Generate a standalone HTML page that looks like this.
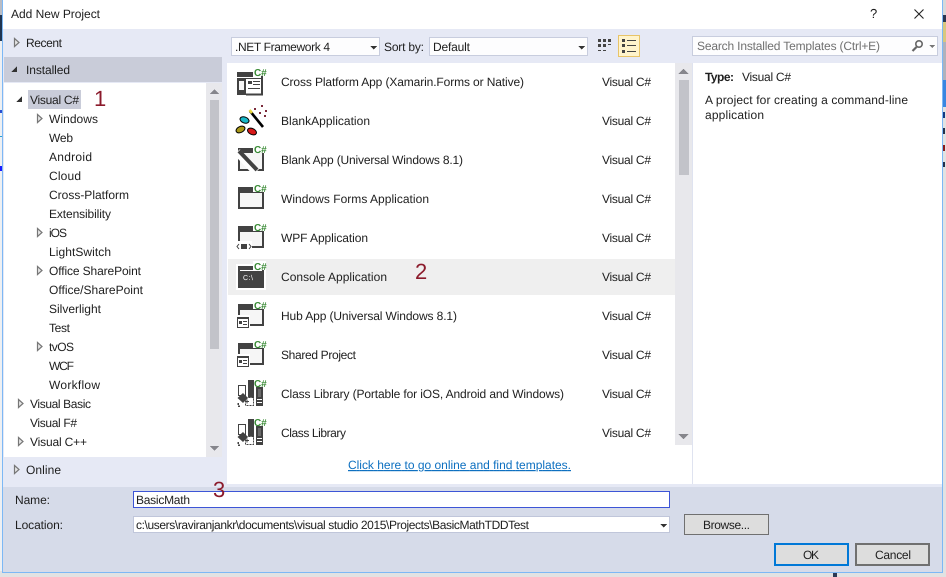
<!DOCTYPE html>
<html>
<head>
<meta charset="utf-8">
<title>Add New Project</title>
<style>
html,body{margin:0;padding:0;background:#fff;width:946px;height:577px;overflow:hidden}
svg{display:block}
text{font-family:"Liberation Sans",sans-serif;font-size:12px;fill:#1e1e1e;text-rendering:geometricPrecision}
.c{font-size:10px;font-weight:bold;fill:#388a34;letter-spacing:-.1px}
</style>
</head>
<body>
<svg width="946" height="577" viewBox="0 0 946 577" xmlns="http://www.w3.org/2000/svg" shape-rendering="crispEdges">
<defs>
<polygon id="ha" points="0.5,0.5 5,4.5 0.5,8.5" fill="#e8e8e8" stroke="#777" stroke-width="1.2" shape-rendering="auto"/>
<g id="win">
  <rect x="239" y="-10" width="24" height="20" fill="#f6f6f6" stroke="#424242" stroke-width="2"/>
  <rect x="238" y="-11" width="26" height="6" fill="#424242"/>
  <rect x="253" y="-15" width="13" height="9" fill="#fff"/>
</g>
<g id="lib">
  <rect x="238.500" y="-7.500" width="7" height="10" fill="#fff" stroke="#424242"/>
  <rect x="248" y="-13" width="6" height="21" fill="#424242"/>
  <rect x="256" y="-6" width="7" height="19" fill="#424242"/>
  <rect x="258" y="-4" width="3" height="8" fill="#6a6a6a"/>
  <rect x="257" y="6" width="5" height="1" fill="#fff"/><rect x="257" y="9" width="5" height="1" fill="#fff"/>
  <rect x="245.500" y="4.500" width="8" height="8" fill="#fff" stroke="#424242" stroke-dasharray="2 1"/>
  <polygon points="237.500,5 243,0 248,5 243,10" fill="#424242" shape-rendering="auto"/>
  <path d="M249 8.500h-4M247 6.500v4" stroke="#424242" fill="none"/>
  <path d="M238 10v3h3" stroke="#424242" stroke-width="1.500" stroke-dasharray="2 1" fill="none"/>
</g>
<g id="hub">
  <rect x="239" y="-10" width="24" height="20" fill="#f6f6f6" stroke="#424242" stroke-width="2"/>
  <rect x="238" y="-11" width="26" height="6" fill="#424242"/>
  <rect x="253" y="-15" width="13" height="9" fill="#fff"/>
  <rect x="236" y="0" width="14" height="14" fill="#fff"/>
  <rect x="237.500" y="2.500" width="11" height="10" fill="#fff" stroke="#424242"/>
  <rect x="237" y="2" width="12" height="2" fill="#424242"/>
  <rect x="239" y="6" width="3" height="3" fill="#424242"/>
  <path d="M243 6.500h4M243 9.500h4" stroke="#424242" fill="none"/>
</g>
</defs>

<!-- backdrop -->
<rect width="946" height="577" fill="#e2e2e2"/>
<rect x="0" y="0" width="3" height="15" fill="#b9bcc4"/>
<rect x="0" y="15" width="3" height="26" fill="#1f3552"/>
<rect x="0" y="41" width="3" height="530" fill="#eef0f3"/>
<rect x="0" y="110" width="2" height="3" fill="#2a4fd0"/>
<rect x="0" y="136" width="2" height="1" fill="#2aa0d0"/>
<rect x="0" y="166" width="2" height="5" fill="#1a1aff"/>
<rect x="943" y="0" width="3" height="15" fill="#d8d8d8"/>
<rect x="943" y="15" width="3" height="7" fill="#2a3550"/>
<rect x="943" y="22" width="3" height="20" fill="#d9c77e"/>
<rect x="943" y="42" width="3" height="38" fill="#b0b2bc"/>
<rect x="943" y="80" width="3" height="27" fill="#3a86e0"/>
<rect x="943" y="112" width="2" height="6" fill="#123a80"/>
<rect x="943" y="128" width="2" height="6" fill="#24304a"/>
<rect x="943" y="145" width="2" height="6" fill="#8a1a1a"/>
<rect x="943" y="162" width="2" height="5" fill="#24304a"/>
<rect x="833" y="573" width="4" height="4" fill="#2c3a55"/>

<!-- dialog -->
<rect x="3" y="0" width="940" height="573" fill="#fff"/>
<rect x="3" y="29" width="939" height="458" fill="#e6e9f5"/>
<rect x="3" y="487" width="939" height="85" fill="#d6dbe9"/>
<path d="M2.500 0V572.500H942.500V0" fill="none" stroke="#7db8f5"/>

<!-- title -->
<text x="11" y="18" textLength="89">Add New Project</text>
<text x="870" y="18" textLength="7" style="font-size:13px">?</text>
<path d="M914.500 9.500L923.500 18.500M923.500 9.500L914.500 18.500" stroke="#222" stroke-width="1.100" fill="none" shape-rendering="auto"/>

<!-- left panel -->
<rect x="4" y="57" width="218" height="25" fill="#c9ccd9"/>
<rect x="4" y="83" width="218" height="374" fill="#fff"/>
<use href="#ha" x="14" y="38"/>
<text x="26" y="47" textLength="36">Recent</text>
<polygon points="17,66 17,72 11,72" fill="#333"/>
<text x="26" y="74" textLength="44">Installed</text>
<rect x="28" y="90" width="53" height="19" fill="#c9ccd9"/>
<polygon points="22,96 22,102 16,102" fill="#333"/>
<text x="30" y="104" textLength="49">Visual C#</text>
<use href="#ha" x="37" y="114"/>
<text x="49" y="123" textLength="49">Windows</text>
<text x="49" y="142" textLength="24">Web</text>
<text x="49" y="161" textLength="43">Android</text>
<text x="49" y="180" textLength="32">Cloud</text>
<text x="49" y="199" textLength="80">Cross-Platform</text>
<text x="49" y="218" textLength="62">Extensibility</text>
<use href="#ha" x="37" y="228"/>
<text x="49" y="237" textLength="18">iOS</text>
<text x="49" y="256" textLength="62">LightSwitch</text>
<use href="#ha" x="37" y="266"/>
<text x="49" y="275" textLength="92">Office SharePoint</text>
<text x="49" y="294" textLength="94">Office/SharePoint</text>
<text x="49" y="313" textLength="52">Silverlight</text>
<text x="49" y="332" textLength="21">Test</text>
<use href="#ha" x="37" y="342"/>
<text x="49" y="351" textLength="25">tvOS</text>
<text x="49" y="370" textLength="25">WCF</text>
<text x="49" y="389" textLength="51">Workflow</text>
<use href="#ha" x="18" y="399"/>
<text x="30" y="408" textLength="61">Visual Basic</text>
<text x="30" y="427" textLength="47">Visual F#</text>
<use href="#ha" x="18" y="437"/>
<text x="30" y="446" textLength="57">Visual C++</text>
<use href="#ha" x="14" y="465"/>
<text x="26" y="474" textLength="35">Online</text>
<rect x="206" y="83" width="16" height="374" fill="#e8e8ec"/>
<rect x="210" y="100" width="9" height="249" fill="#c2c3c9"/>
<polygon points="214.500,89 219,94 210,94" fill="#86868c"/>
<polygon points="210,446 219,446 214.500,451" fill="#86868c"/>

<!-- toolbar -->
<rect x="231.500" y="37.500" width="148" height="18" fill="#fdfdfe" stroke="#c8cdde"/>
<text x="235" y="51" textLength="95">.NET Framework 4</text>
<polygon points="370,46 377,46 373.500,49.500" fill="#333"/>
<text x="384" y="51" textLength="40">Sort by:</text>
<rect x="429.500" y="37.500" width="158" height="18" fill="#fdfdfe" stroke="#c8cdde"/>
<text x="433" y="51" textLength="37">Default</text>
<polygon points="578,46 585,46 581.500,49.500" fill="#333"/>
<g fill="#444">
  <rect x="598" y="39" width="3" height="3"/><rect x="603" y="39" width="3" height="3"/><rect x="608" y="39" width="3" height="3"/>
  <rect x="598" y="44" width="3" height="3"/><rect x="603" y="44" width="3" height="3"/>
  <rect x="598" y="50" width="3" height="1"/><rect x="603" y="50" width="3" height="1"/>
  <rect x="608" y="44" width="3" height="1"/>
</g>
<rect x="618.500" y="35.500" width="21" height="21" fill="#fff4cc" stroke="#e8c468"/>
<g fill="#444">
  <rect x="622" y="39" width="3" height="3"/><rect x="622" y="44" width="3" height="3"/><rect x="622" y="50" width="3" height="3"/>
  <rect x="627" y="40" width="9" height="1"/><rect x="627" y="45" width="9" height="1"/><rect x="627" y="51" width="9" height="1"/>
</g>
<rect x="692.500" y="36.500" width="245" height="19" fill="#fdfdfe" stroke="#c8cdde"/>
<text x="697" y="50" textLength="183" style="fill:#717171">Search Installed Templates (Ctrl+E)</text>
<g shape-rendering="auto" fill="none" stroke="#666">
  <circle cx="919" cy="44" r="3.200" stroke-width="1.600"/>
  <path d="M916.500 47L912.500 51" stroke-width="2.200"/>
</g>
<polygon points="929,45 935,45 932,48" fill="#777"/>

<!-- list panel -->
<rect x="227" y="63" width="448" height="421" fill="#fff"/>
<rect x="228" y="259" width="447" height="36" fill="#efefef"/>
<rect x="675" y="63" width="17" height="382" fill="#e8e8ec"/>
<rect x="675" y="445" width="17" height="39" fill="#fff"/>
<rect x="679" y="80" width="10" height="95" fill="#c2c3c9"/>
<polygon points="683.500,69 689,74 678,74" fill="#86868c"/>
<polygon points="678,434 689,434 683.500,439" fill="#86868c"/>
<rect x="692" y="63" width="1" height="421" fill="#dfe3f0"/>
<rect x="693" y="63" width="249" height="421" fill="#fff"/>

<!-- icons -->
<g transform="translate(0,81)">
  <rect x="237" y="-9" width="16" height="5" fill="#424242"/>
  <rect x="237" y="-3" width="26" height="1" fill="#424242"/>
  <path d="M262 -5V13.500H246" fill="none" stroke="#424242" stroke-width="2"/>
  <rect x="237" y="-2" width="9" height="16" fill="#424242"/>
  <rect x="239" y="0" width="5" height="9" fill="#f6f6f6"/>
  <rect x="248" y="0" width="4" height="3" fill="#424242"/>
  <path d="M253 .500h7M253 3.500h7M248 7.500h12" stroke="#424242" stroke-width="1.300" fill="none"/>
  <text class="c" x="254" y="-5">C#</text>
</g>
<g transform="translate(0,120)" shape-rendering="auto">
  <path d="M250 -9L263 7" stroke="#000" stroke-width="2.600" fill="none"/>
  <path d="M249.500 -10L252 -7" stroke="#e8d840" stroke-width="2.600" fill="none"/>
  <ellipse cx="244.500" cy="0" rx="4.700" ry="3" fill="#18b8c8" stroke="#000" transform="rotate(20 244.500 0)"/>
  <ellipse cx="240.500" cy="9.500" rx="4.700" ry="3" fill="#a89818" stroke="#000" transform="rotate(-25 240.500 9.500)"/>
  <ellipse cx="252" cy="11.500" rx="4.700" ry="3" fill="#d81818" stroke="#000" transform="rotate(25 252 11.500)"/>
  <g fill="#7a2a3a"><rect x="254" y="-12" width="2" height="2"/><rect x="261" y="-15" width="2" height="2"/><rect x="265" y="-10" width="2" height="2"/><rect x="259" y="-8" width="2" height="2"/><rect x="264" y="-5" width="2" height="2"/></g>
</g>
<g transform="translate(0,159)">
  <rect x="239" y="-10" width="24" height="21" fill="#f6f6f6" stroke="#424242" stroke-width="2"/>
  <rect x="238" y="-11" width="15" height="5" fill="#424242"/>
  <rect x="253" y="-15" width="13" height="9" fill="#fff"/>
  <path d="M237 -7L256 13" stroke="#fff" stroke-width="8" fill="none" shape-rendering="auto"/>
  <path d="M239 -8L257 11" stroke="#424242" stroke-width="4" fill="none" shape-rendering="auto"/>
  <text class="c" x="254" y="-6">C#</text>
</g>
<g transform="translate(0,198)"><use href="#win"/><text class="c" x="254" y="-6">C#</text></g>
<g transform="translate(0,237)">
  <use href="#win"/>
  <rect x="235" y="4" width="17" height="10" fill="#fff"/>
  <rect x="241" y="7" width="6" height="5" fill="#424242"/>
  <path d="M239 7l-2 2.500 2 2.500M249 7l2 2.500 -2 2.500" stroke="#424242" fill="none" shape-rendering="auto"/>
  <text class="c" x="254" y="-6">C#</text>
</g>
<g transform="translate(0,276)">
  <rect x="236" y="-12" width="30" height="26" fill="#fff"/>
  <rect x="238" y="-10" width="26" height="22" fill="#424242"/>
  <rect x="240" y="-6" width="22" height="1" fill="#fff"/>
  <text x="243" y="4" style="font-size:7px;fill:#fff" textLength="10">C:\</text>
  <rect x="253" y="-15" width="13" height="9" fill="#fff"/>
  <text class="c" x="254" y="-6">C#</text>
</g>
<g transform="translate(0,315)"><use href="#hub"/><text class="c" x="254" y="-6">C#</text></g>
<g transform="translate(0,354)"><use href="#hub"/><text class="c" x="254" y="-6">C#</text></g>
<g transform="translate(0,393)"><use href="#lib"/><text class="c" x="254" y="-6">C#</text></g>
<g transform="translate(0,432)"><use href="#lib"/><text class="c" x="254" y="-6">C#</text></g>

<!-- list text -->
<text x="281" y="86" textLength="243">Cross Platform App (Xamarin.Forms or Native)</text>
<text x="281" y="125" textLength="89">BlankApplication</text>
<text x="281" y="164" textLength="182">Blank App (Universal Windows 8.1)</text>
<text x="281" y="203" textLength="148">Windows Forms Application</text>
<text x="281" y="242" textLength="87">WPF Application</text>
<text x="281" y="281" textLength="106">Console Application</text>
<text x="281" y="320" textLength="176">Hub App (Universal Windows 8.1)</text>
<text x="281" y="359" textLength="75">Shared Project</text>
<text x="281" y="398" textLength="283">Class Library (Portable for iOS, Android and Windows)</text>
<text x="281" y="437" textLength="65">Class Library</text>
<text x="602" y="86" textLength="49">Visual C#</text>
<text x="602" y="125" textLength="49">Visual C#</text>
<text x="602" y="164" textLength="49">Visual C#</text>
<text x="602" y="203" textLength="49">Visual C#</text>
<text x="602" y="242" textLength="49">Visual C#</text>
<text x="602" y="281" textLength="49">Visual C#</text>
<text x="602" y="320" textLength="49">Visual C#</text>
<text x="602" y="359" textLength="49">Visual C#</text>
<text x="602" y="398" textLength="49">Visual C#</text>
<text x="602" y="437" textLength="49">Visual C#</text>
<text x="348" y="469" textLength="223" style="fill:#0e70c0;text-decoration:underline">Click here to go online and find templates.</text>

<!-- details -->
<text x="705" y="81" textLength="29" style="font-weight:bold">Type:</text>
<text x="742" y="81" textLength="49">Visual C#</text>
<text x="705" y="104" textLength="203">A project for creating a command-line</text>
<text x="705" y="119" textLength="59">application</text>

<!-- bottom form -->
<text x="15" y="504" textLength="35">Name:</text>
<rect x="133.500" y="491.500" width="536" height="16" fill="#fff" stroke="#3d55d6"/>
<text x="136" y="504" textLength="54">BasicMath</text>
<text x="15" y="529" textLength="48">Location:</text>
<rect x="133.500" y="516.500" width="536" height="16" fill="#fff" stroke="#c0c6da"/>
<text x="136" y="529" textLength="393">c:\users\raviranjankr\documents\visual studio 2015\Projects\BasicMathTDDTest</text>
<polygon points="660,524 667,524 663.500,527.500" fill="#333"/>
<rect x="684.500" y="514.500" width="84" height="20" fill="#dddddd" stroke="#707070"/>
<text x="703" y="529" textLength="47">Browse...</text>
<rect x="775" y="544" width="73" height="21" fill="#dddddd" stroke="#0078d7" stroke-width="2"/>
<text x="803" y="559" textLength="16">OK</text>
<rect x="856" y="544" width="73" height="21" fill="#dddddd" stroke="#707070" stroke-width="2"/>
<text x="875" y="559" textLength="36">Cancel</text>

<!-- annotations -->
<g shape-rendering="auto">
<text x="94" y="106" style="font-size:22px;fill:#8b1a2b">1</text>
<text x="415" y="279" style="font-size:22px;fill:#8b1a2b">2</text>
<text x="213" y="497" style="font-size:22px;fill:#8b1a2b">3</text>
</g>
</svg>
</body>
</html>
